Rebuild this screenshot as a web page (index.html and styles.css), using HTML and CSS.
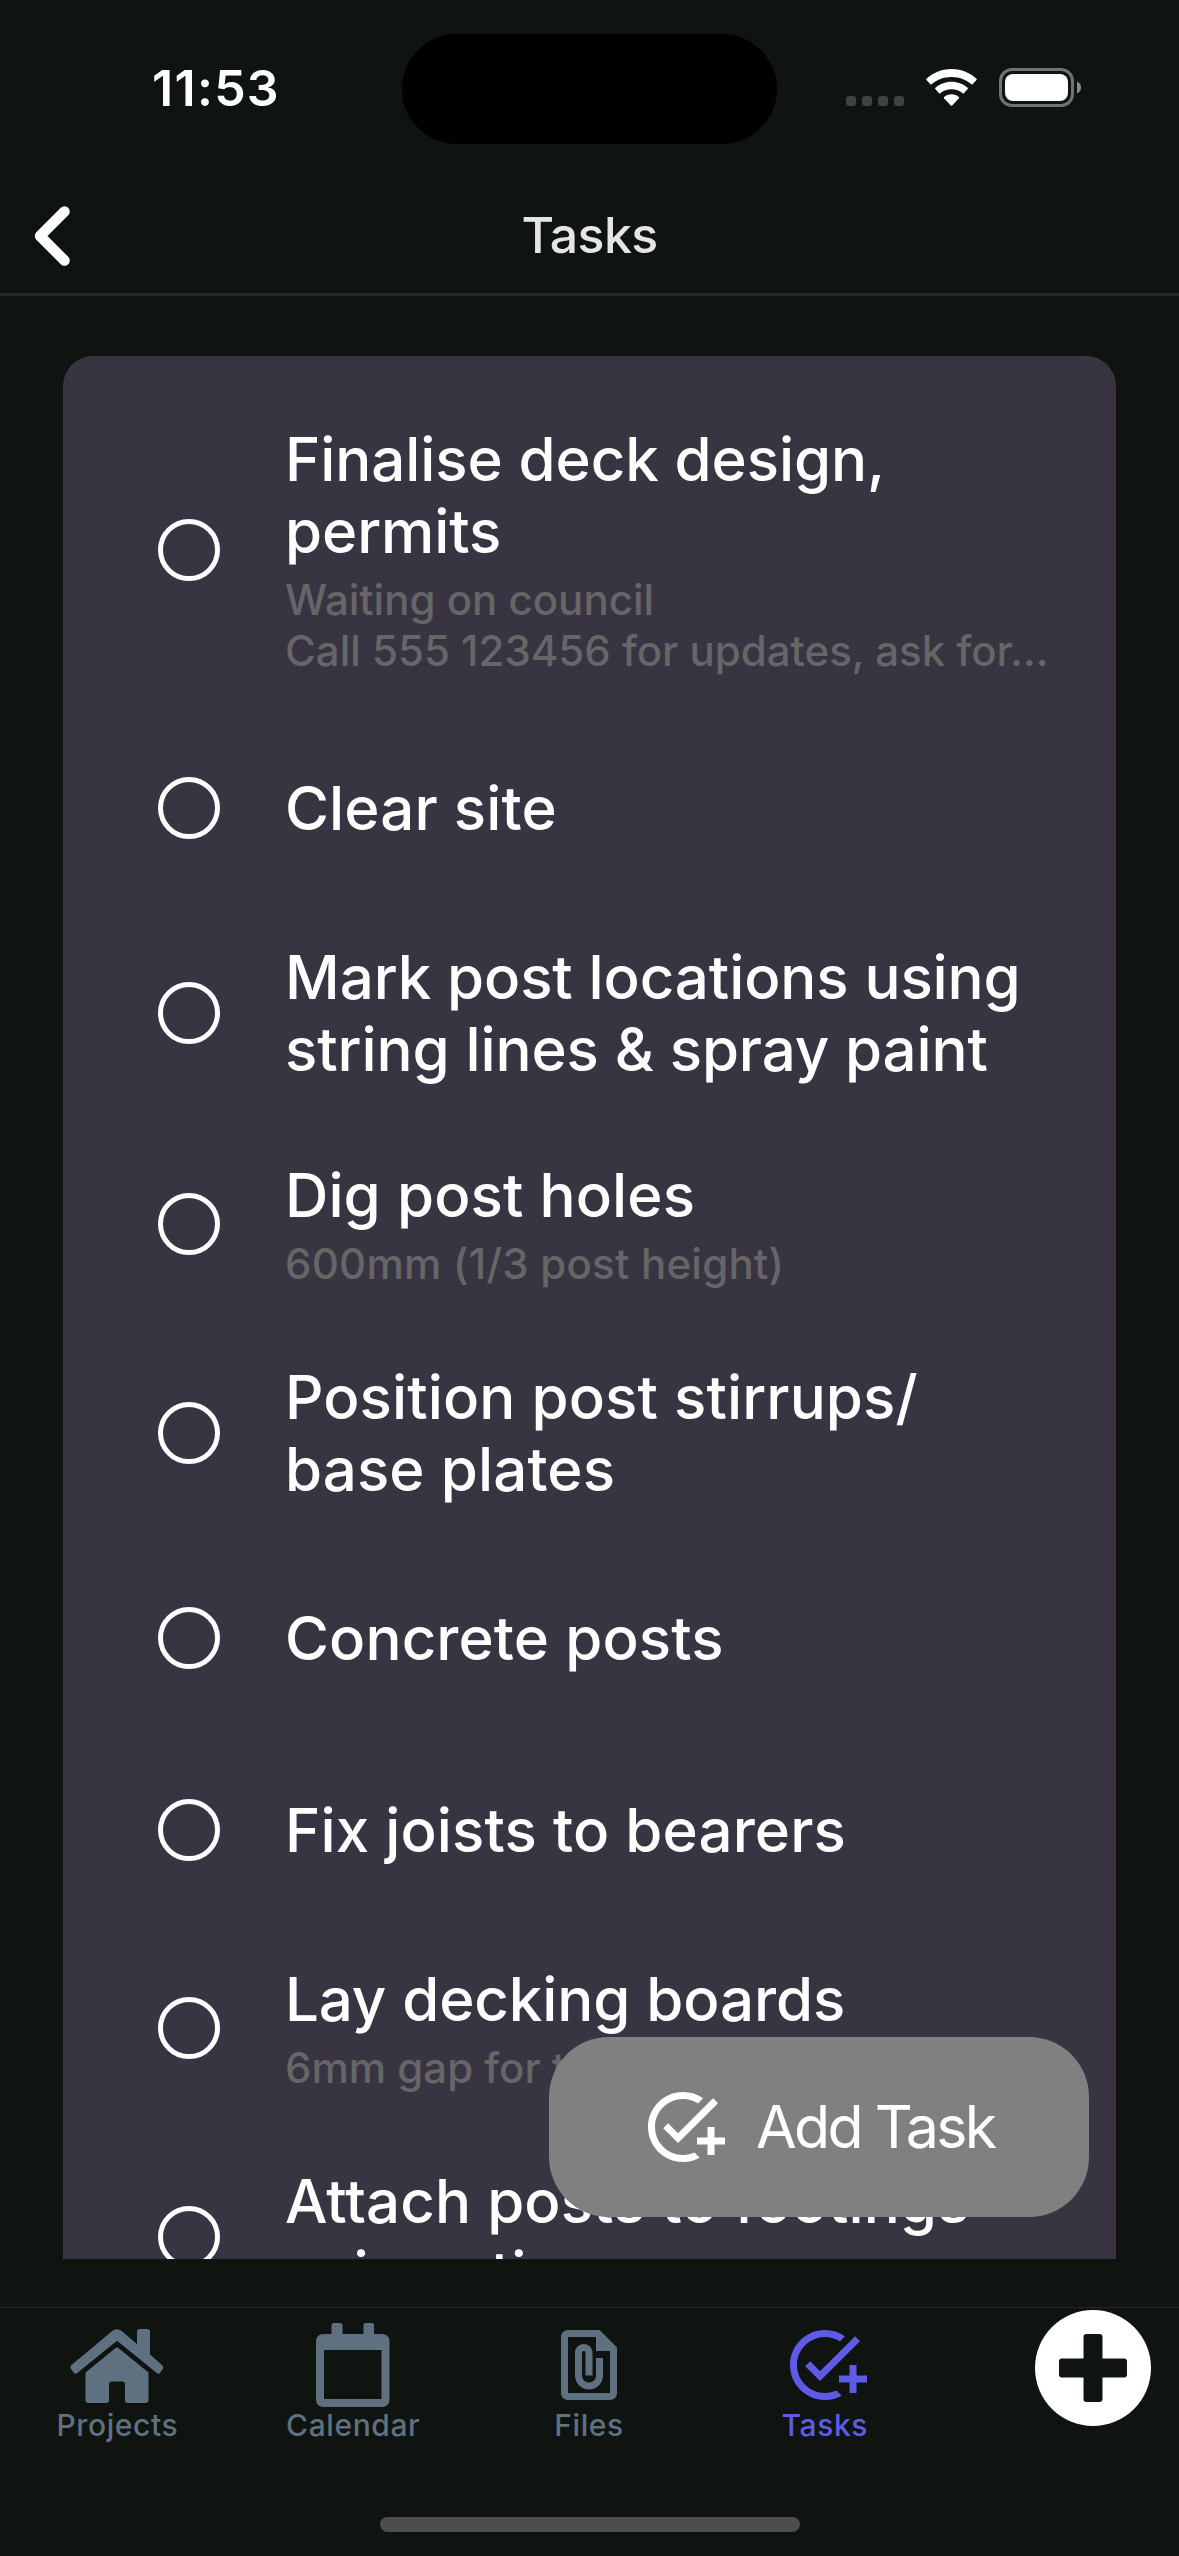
FILE: index.html
```html
<!DOCTYPE html>
<html lang="en">
<head>
<meta charset="utf-8">
<title>Tasks</title>
<link rel="stylesheet" href="styles.css">
</head>
<body>
<div class="screen">
  <div class="status">
    <div class="time">11:53</div>
    <div class="island"></div>
    <div class="indicators">
      <div class="dots"><i></i><i></i><i></i><i></i></div>
      <svg class="wifi" viewBox="0 0 51 37" fill="#fff">
        <path d="M25.500 0C35.500 0 44.500 4 50.500 9.700Q51 10.300 50.500 10.900L46.600 15.300Q46.100 15.800 45.500 15.300C40.200 10.600 33.400 7.900 25.500 7.900S10.800 10.600 5.500 15.300Q4.900 15.800 4.400 15.300L.5 10.900Q0 10.300 .5 9.700C6.500 4 15.500 0 25.500 0Z"/>
        <path d="M25.500 12.700C31.800 12.700 37.500 15 41.600 18.800Q42.200 19.400 41.700 20L37.900 24.300Q37.400 24.800 36.700 24.300C33.700 21.700 29.800 20.300 25.500 20.300S17.300 21.700 14.300 24.300Q13.600 24.800 13.100 24.300L9.300 20Q8.800 19.400 9.400 18.800C13.500 15 19.200 12.700 25.500 12.700Z"/>
        <path d="M25.500 25.200C28.300 25.200 30.900 26.200 32.800 27.900Q33.400 28.500 32.900 29.200L26.200 36.500Q25.500 37.100 24.800 36.500L18.100 29.200Q17.600 28.500 18.200 27.900C20.100 26.200 22.700 25.200 25.500 25.200Z"/>
      </svg>
      <svg class="battery" viewBox="0 0 83 39">
        <rect x="1.500" y="1.500" width="72" height="36" rx="11.500" fill="none" stroke="#707371" stroke-width="3"/>
        <rect x="6" y="6" width="63" height="27" rx="8" fill="#fff"/>
        <path d="M78 13.500C80.500 14.500 82 16.800 82 19.500S80.500 24.500 78 25.500Z" fill="#888b89"/>
      </svg>
    </div>
  </div>
  <header class="header">
    <svg class="back" viewBox="0 0 36 60"><path d="M30.500 5.500L6 30L30.500 54.500" fill="none" stroke="#fff" stroke-width="10.500" stroke-linecap="round" stroke-linejoin="round"/></svg>
    <h1 class="title">Tasks</h1>
  </header>
  <main class="content">
    <ul class="card">
      <li class="row row-long"><span class="check"></span><div class="text"><p class="name">Finalise deck design, permits</p><p class="note">Waiting on council<br>Call 555 123456 for updates, ask for...</p></div></li>
      <li class="row"><span class="check"></span><div class="text"><p class="name loose">Clear site</p></div></li>
      <li class="row"><span class="check"></span><div class="text"><p class="name">Mark post locations using string lines &amp; spray paint</p></div></li>
      <li class="row row-note"><span class="check"></span><div class="text"><p class="name loose">Dig post holes</p><p class="note loose">600mm (1/3 post height)</p></div></li>
      <li class="row"><span class="check"></span><div class="text"><p class="name loose">Position post stirrups/<br>base plates</p></div></li>
      <li class="row"><span class="check"></span><div class="text"><p class="name loose">Concrete posts</p></div></li>
      <li class="row"><span class="check"></span><div class="text"><p class="name loose">Fix joists to bearers</p></div></li>
      <li class="row row-note"><span class="check"></span><div class="text"><p class="name">Lay decking boards</p><p class="note">6mm gap for t</p></div></li>
      <li class="row"><span class="check"></span><div class="text"><p class="name loose">Attach posts to footings using stirrups</p></div></li>
    </ul>
    <button class="add">
      <svg class="icon" viewBox="0 0 24 24" fill="currentColor"><path d="M22 5.180L10.590 16.600l-4.240-4.240 1.410-1.410 2.830 2.830 10-10L22 5.180zM12 20c-4.420 0-8-3.580-8-8s3.580-8 8-8c1.570 0 3.040.46 4.280 1.250l1.450-1.450A10.020 10.020 0 0 0 12 2C6.480 2 2 6.480 2 12s4.480 10 10 10c1.730 0 3.360-.44 4.780-1.220l-1.500-1.500c-1 .46-2.110.72-3.280.72zm7-5h-3v2h3v3h2v-3h3v-2h-3v-3h-2v3z"/></svg>
      <span>Add Task</span>
    </button>
  </main>
  <nav class="tabs">
    <a class="tab">
      <svg class="home" viewBox="0 0 94 84" fill="currentColor"><path d="M42.500 7.800Q47 4.500 51.500 7.800L67 21V8.500Q67 6 69.500 6H77.500Q80 6 80 8.500V31.500L92 42Q94 44 92.800 46L90 50Q88.500 51.500 86.800 50L47 17.800L7.200 50Q5.500 51.500 4 50L.8 45.500Q-.3 43.500 1.500 42Z"/><path d="M45 25.500Q47 23.500 49 25.500L78.500 49.500V77Q78.500 80 75.500 80H57.500Q55 80 55 77V61.500Q55 58.500 52 58.500H42Q39 58.500 39 61.500V77Q39 80 36 80H18.500Q15.500 80 15.500 77V49.500Z"/></svg>
      <span>Projects</span>
    </a>
    <a class="tab">
      <svg class="cal" viewBox="0 0 74 84" fill="currentColor"><path fill-rule="evenodd" d="M18 0H24.500Q26.500 0 26.500 2V11H47.500V2Q47.500 0 49.500 0H56Q58 0 58 2V11H65.500Q73.500 11 73.500 19V76Q73.500 84 65.500 84H8Q0 84 0 76V19Q0 11 8 11H15.500V2Q15.500 0 18 0ZM8 27V76H65.500V27Z"/></svg>
      <span>Calendar</span>
    </a>
    <a class="tab">
      <svg class="icon" viewBox="0 0 24 24" fill="currentColor"><path d="M15 2H6c-1.100 0-2 .9-2 2v16c0 1.100.9 2 2 2h12c1.100 0 2-.9 2-2V7L15 2zM18 20H6V4h8v4h4v12z"/><path d="M16 10v5c0 2.210-1.790 4-4 4s-4-1.790-4-4V8.500C8 7.120 9.120 6 10.500 6S13 7.120 13 8.500V15h-2V8.500c0-.28-.22-.5-.5-.5s-.5.220-.5.500V15c0 1.100.9 2 2 2s2-.9 2-2v-5h2z"/></svg>
      <span>Files</span>
    </a>
    <a class="tab active">
      <svg class="icon" viewBox="0 0 24 24" fill="currentColor"><path d="M22 5.180L10.590 16.600l-4.240-4.240 1.410-1.410 2.830 2.830 10-10L22 5.180zM12 20c-4.420 0-8-3.580-8-8s3.580-8 8-8c1.570 0 3.040.46 4.280 1.250l1.450-1.450A10.020 10.020 0 0 0 12 2C6.480 2 2 6.480 2 12s4.480 10 10 10c1.730 0 3.360-.44 4.780-1.220l-1.500-1.500c-1 .46-2.110.72-3.280.72zm7-5h-3v2h3v3h2v-3h3v-2h-3v-3h-2v3z"/></svg>
      <span>Tasks</span>
    </a>
    <a class="plus"><svg viewBox="0 0 116 116"><circle cx="58" cy="58" r="58" fill="#fff"/><path d="M51.500 24H64.500Q67.500 24 67.500 27V48.500H89Q92 48.500 92 51.500V64.500Q92 67.500 89 67.500H67.500V89Q67.500 92 64.500 92H51.500Q48.500 92 48.500 89V67.500H27Q24 67.500 24 64.500V51.500Q24 48.500 27 48.500H48.500V27Q48.500 24 51.500 24Z" fill="#0f1410"/></svg></a>
  </nav>
  <div class="indicator"></div>
</div>
</body>
</html>
```
FILE: styles.css
```css
* { box-sizing: border-box; margin: 0; padding: 0; }
body { background: #0f1410; font-family: Inter, "Liberation Sans", sans-serif; color: #fff; }
.screen { width: 1179px; height: 2556px; overflow: hidden; display: flex; flex-direction: column; background: #0f1410; }
.status { height: 177px; flex: none; display: grid; grid-template-columns: 402px 375px 402px; align-items: start; }
.time { padding: 58px 0 0 152px; font-size: 50px; line-height: 60px; font-weight: 600; letter-spacing: 1.3px; }
.island { margin-top: 34px; height: 110px; border-radius: 55px; background: #000; }
.indicators { display: flex; align-items: flex-start; padding: 68px 0 0 69px; }
.dots { display: flex; gap: 6px; padding-top: 28px; width: 80px; }
.dots i { width: 10px; height: 10px; border-radius: 3px; background: #404341; }
.wifi { width: 51px; height: 37px; margin: 1px 22px 0 0; }
.battery { width: 83px; height: 39px; }
.header { height: 119px; flex: none; display: grid; grid-template-columns: 200px 1fr 200px; align-items: center; border-bottom: 3px solid #222624; }
.back { width: 36px; height: 60px; margin: 2px 0 0 34px; }
.title { text-align: center; font-size: 50px; line-height: 60px; font-weight: 500; letter-spacing: -0.6px; color: #e5e5e7; }
.content { position: relative; height: 2011px; flex: none; padding: 60px 63px 48px; }
.card { height: 1903px; overflow: hidden; list-style: none; background: #383442; border-radius: 30px 30px 0 0; padding-top: 30px; }
.row { min-height: 192px; padding: 37px 0 37px 95px; display: flex; align-items: center; gap: 65px; }
.row-long { padding-bottom: 36px; }
.row-note { padding-bottom: 35px; }
.check { width: 62px; height: 62px; flex: none; border: 5px solid #fff; border-radius: 50%; }
.text { width: 790px; }
.name { font-size: 60px; line-height: 72px; font-weight: 500; letter-spacing: -0.1px; }
.note { margin-top: 7px; font-size: 42px; line-height: 51px; font-weight: 500; color: #666; white-space: nowrap; }
.name.loose { letter-spacing: 0.1px; }
.note.loose { letter-spacing: 0.25px; }
.add { position: absolute; left: 549px; top: 1741px; width: 540px; height: 180px; border: 0; border-radius: 60px; background: #808080; color: #fff; font: 400 59px/72px Inter, sans-serif; letter-spacing: -2.700px; display: flex; align-items: center; padding-left: 92px; gap: 31px; white-space: nowrap; }
.icon { width: 84px; height: 84px; display: block; }
.tabs { height: 210px; flex: none; display: grid; grid-template-columns: repeat(5, 1fr); border-top: 1px solid #222624; }
.tab { display: flex; flex-direction: column; align-items: center; padding: 15px 1px 0 0; color: #5f7080; font-size: 30px; line-height: 36px; font-weight: 500; letter-spacing: 0.6px; }
.tab.active { color: #5e5ce6; }
.home { width: 94px; height: 84px; }
.cal { width: 74px; height: 84px; }
.plus { padding: 2px 0 0 92px; }
.plus svg { width: 116px; height: 116px; display: block; }
.indicator { width: 420px; height: 15px; border-radius: 8px; background: #4d4d4d; margin: 0 auto; }
```
